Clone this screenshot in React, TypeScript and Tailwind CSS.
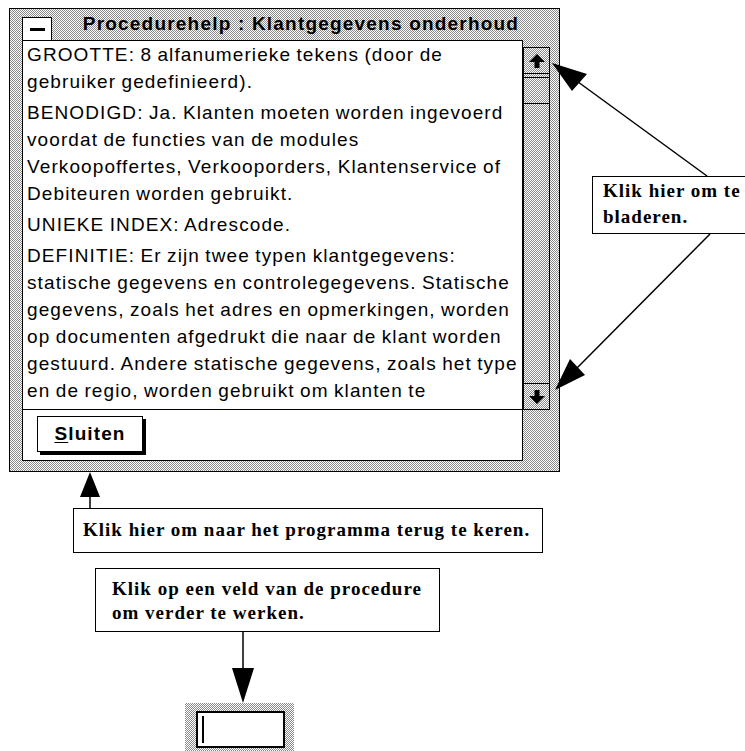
const dither =
  'bg-[image:repeating-conic-gradient(#8a8a8a_0%_25%,#ffffff_0%_50%)] bg-size-[2px_2px]'

const paragraphs: string[][] = [
  ['GROOTTE: 8 alfanumerieke tekens (door de', 'gebruiker gedefinieerd).'],
  [
    'BENODIGD: Ja. Klanten moeten worden ingevoerd',
    'voordat de functies van de modules',
    'Verkoopoffertes, Verkooporders, Klantenservice of',
    'Debiteuren worden gebruikt.',
  ],
  ['UNIEKE INDEX: Adrescode.'],
  [
    'DEFINITIE: Er zijn twee typen klantgegevens:',
    'statische gegevens en controlegegevens. Statische',
    'gegevens, zoals het adres en opmerkingen, worden',
    'op documenten afgedrukt die naar de klant worden',
    'gestuurd. Andere statische gegevens, zoals het type',
    'en de regio, worden gebruikt om klanten te',
  ],
]

function ScrollArrow({ down }: { down?: boolean }) {
  return (
    <svg width="16" height="14" viewBox="0 0 16 14" className={down ? 'rotate-180' : ''}>
      <polygon points="8,0 16,8 10.5,8 10.5,14 5.5,14 5.5,8 0,8" fill="#000" />
    </svg>
  )
}

function Scrollbar() {
  return (
    <div className={`mt-[7px] flex h-[363px] w-[27px] flex-col border border-black ${dither}`}>
      <div className="flex h-[26px] items-center justify-center border-b border-black">
        <ScrollArrow />
      </div>
      <div className="mt-[3px] h-[27px] border-y border-black" />
      <div className="flex-1" />
      <div className="flex h-[26px] items-center justify-center border-t border-black">
        <ScrollArrow down />
      </div>
    </div>
  )
}

function HelpWindow() {
  return (
    <div className={`ml-[9px] h-[464px] w-[551px] border border-black ${dither}`}>
      {/* title */}
      <div className="flex h-[32px]">
        <div className="ml-[12px] mt-[8px] flex h-[24px] w-[30px] justify-center border border-black bg-white pt-[10px]">
          <div className="h-[3px] w-[15px] bg-black" />
        </div>
        <div className="flex-1 whitespace-nowrap pr-[9px] pt-[5px] text-center text-[19px] font-bold leading-[19px] tracking-[1.2px]">
          Procedurehelp : Klantgegevens onderhoud
        </div>
      </div>

      <div className="-mt-px ml-[12px] flex items-start">
        <div className="flex h-[421px] w-[501px] flex-col border border-black bg-white">
          <div className="flex h-[368px] flex-col gap-[4px] overflow-hidden pl-[4px] text-[19px] leading-[27px] tracking-[1.1px] [word-spacing:-1px]">
            {paragraphs.map((lines, i) => (
              <div key={i}>
                {lines.map((line) => (
                  <div key={line} className="whitespace-nowrap">
                    {line}
                  </div>
                ))}
              </div>
            ))}
          </div>
          <div className="h-[51px] border-t border-black pl-[14px] pt-[6px]">
            <button
              type="button"
              className="flex h-[36px] w-[106px] items-center justify-center border border-black bg-white text-[19px] font-bold tracking-[1.1px] shadow-[3px_3px_0_#000]"
            >
              <span className="underline underline-offset-2">S</span>luiten
            </button>
          </div>
        </div>
        <Scrollbar />
      </div>
    </div>
  )
}

function Arrows() {
  return (
    <svg className="pointer-events-none absolute left-0 top-0" width="745" height="751" viewBox="0 0 745 751">
      <g stroke="#000" strokeWidth="1.5" fill="none">
        <line x1="707" y1="176" x2="574" y2="79" />
        <line x1="710" y1="234" x2="577" y2="368" />
        <line x1="90" y1="508" x2="90" y2="495" />
        <line x1="243" y1="632" x2="243" y2="670" />
      </g>
      <g fill="#000">
        <polygon points="552,63 587,74 572,91" />
        <polygon points="555,390 585,375 570,359" />
        <polygon points="90,472 100,497 80,497" />
        <polygon points="243,703 232,668 254,668" />
      </g>
    </svg>
  )
}

export default function App() {
  return (
    <div className="relative h-[751px] w-[745px] overflow-hidden bg-white pt-[8px] font-['Liberation_Sans',Arial,sans-serif] text-black">
      <HelpWindow />

      <div className="ml-[73px] mt-[36px] flex h-[45px] w-[470px] items-center border border-black bg-white pl-[9px] font-['Liberation_Serif','Times_New_Roman',serif] text-[19px] font-bold tracking-[1px] whitespace-nowrap">
        Klik hier om naar het programma terug te keren.
      </div>

      <div className="ml-[95px] mt-[15px] h-[64px] w-[345px] border border-black bg-white pl-[16px] pt-[8px] font-['Liberation_Serif','Times_New_Roman',serif] text-[19px] font-bold leading-[24px] tracking-[1px] whitespace-nowrap">
        <div>Klik op een veld van de procedure</div>
        <div>om verder te werken.</div>
      </div>

      <div className={`ml-[185px] mt-[71px] h-[48px] w-[109px] pl-[11px] pt-[8px] ${dither}`}>
        <div className="h-[37px] w-[89px] border-2 border-black bg-white pl-[4px] pt-[3px]">
          <div className="h-[27px] w-[2px] bg-black" />
        </div>
      </div>

      <div className="absolute left-[592px] top-[176px] h-[58px] w-[170px] border border-black bg-white pl-[10px] pt-[1px] font-['Liberation_Serif','Times_New_Roman',serif] text-[19px] font-bold leading-[26px] tracking-[1px] whitespace-nowrap">
        <div>Klik hier om te</div>
        <div>bladeren.</div>
      </div>

      <Arrows />
    </div>
  )
}
